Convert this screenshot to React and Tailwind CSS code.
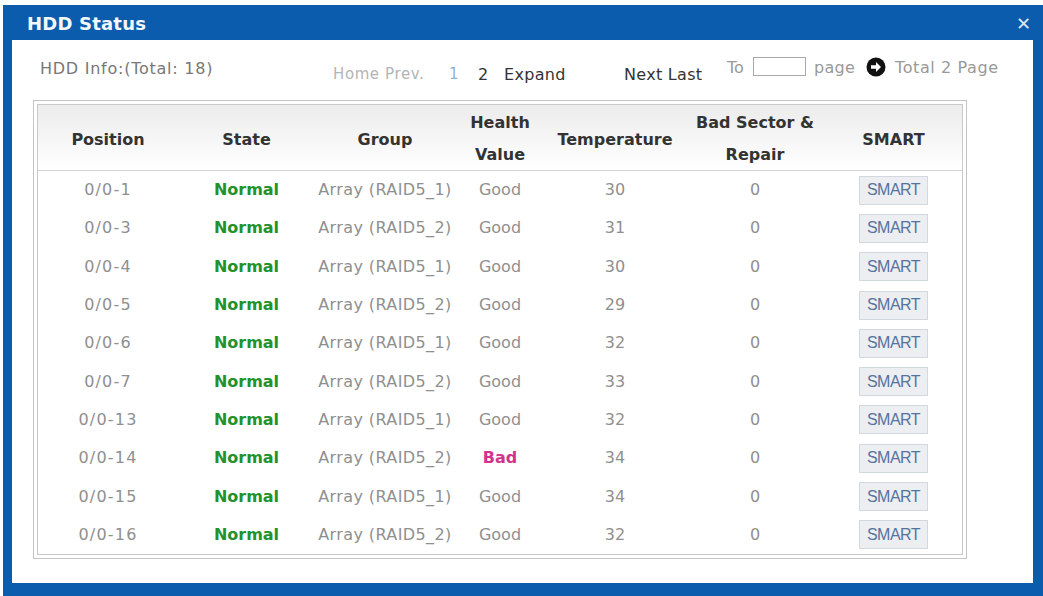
import { useState } from "react";

const ROWS = [
  { pos: "0/0-1", group: "Array (RAID5_1)", health: "Good", temp: 30 },
  { pos: "0/0-3", group: "Array (RAID5_2)", health: "Good", temp: 31 },
  { pos: "0/0-4", group: "Array (RAID5_1)", health: "Good", temp: 30 },
  { pos: "0/0-5", group: "Array (RAID5_2)", health: "Good", temp: 29 },
  { pos: "0/0-6", group: "Array (RAID5_1)", health: "Good", temp: 32 },
  { pos: "0/0-7", group: "Array (RAID5_2)", health: "Good", temp: 33 },
  { pos: "0/0-13", group: "Array (RAID5_1)", health: "Good", temp: 32 },
  { pos: "0/0-14", group: "Array (RAID5_2)", health: "Bad", temp: 34 },
  { pos: "0/0-15", group: "Array (RAID5_1)", health: "Good", temp: 34 },
  { pos: "0/0-16", group: "Array (RAID5_2)", health: "Good", temp: 32 },
];

const COLS = "grid grid-cols-[140px_137px_140px_90px_140px_140px_137px]";

function GoIcon() {
  return (
    <svg width="20" height="20" viewBox="0 0 20 20">
      <circle cx="10" cy="10" r="9.5" fill="#111" />
      <path d="M5 8.2h5V5l5 5-5 5v-3.2H5z" fill="#fff" />
    </svg>
  );
}

export default function App() {
  const [page, setPage] = useState("");

  return (
    <div className="w-[1043px] h-[596px] bg-white pt-[5px] pl-[3px] font-['DejaVu_Sans',sans-serif]">
      <div className="w-[1040px] h-[591px] bg-[#0b5cad] flex flex-col">
        {/* Title bar */}
        <div className="h-[35px] flex items-center justify-between pl-[24px] pr-[12px] pt-[2px]">
          <span className="text-[#f4f8fc] font-bold text-[18px] tracking-[0.2px]">HDD Status</span>
          <span className="text-[#dbe6f3] text-[18px] leading-none font-bold">✕</span>
        </div>

        {/* Body */}
        <div className="ml-[9px] mr-[10px] h-[543px] bg-white flex flex-col">
          <div className="h-[60px] relative text-[16px] shrink-0">
            <span className="absolute left-[28px] top-[17px] text-[#777] tracking-[0.75px]">HDD Info:(Total: 18)</span>
            <span className="absolute left-[321px] top-[23px] text-[#b4b4b4] text-[15px] tracking-[0.6px]">Home Prev.</span>
            <span className="absolute left-[437px] top-[23px] text-[#8fb4d8] text-[15px]">1</span>
            <span className="absolute left-[466px] top-[23px] text-[#333]">2</span>
            <span className="absolute left-[492px] top-[23px] text-[#333] tracking-[0.3px]">Expand</span>
            <span className="absolute left-[612px] top-[23px] text-[#333] tracking-[0.3px]">Next Last</span>
            <span className="absolute left-[715px] top-[16px] text-[#999]">To</span>
            <input
              value={page}
              onChange={(e) => setPage(e.target.value)}
              className="absolute left-[741px] top-[17px] w-[53px] h-[19px] border border-[#a9a9a9] outline-none"
            />
            <span className="absolute left-[802px] top-[16px] text-[#999] tracking-[0.3px]">page</span>
            <span className="absolute left-[854px] top-[17px]">
              <GoIcon />
            </span>
            <span className="absolute left-[883px] top-[16px] text-[#999] tracking-[0.6px]">Total 2 Page</span>
          </div>

          {/* Table */}
          <div className="ml-[21px] w-[934px] border border-[#c4c4c4] p-[3px]">
            <div className="border border-[#c9c9c9] w-full">
              <div className={`${COLS} h-[66px] bg-gradient-to-b from-[#ececec] to-white border-b border-[#d4d4d4] text-[#333] font-bold text-[16px] items-center text-center`}>
                <div className="pt-[4px]">Position</div>
                <div className="pt-[4px]">State</div>
                <div className="pt-[4px]">Group</div>
                <div className="leading-[32px] pt-[2px]">Health<br />Value</div>
                <div className="pt-[4px]">Temperature</div>
                <div className="leading-[32px] pt-[2px]">Bad Sector &amp;<br />Repair</div>
                <div className="pt-[4px]">SMART</div>
              </div>
              {ROWS.map((r) => (
                <div key={r.pos} className={`${COLS} h-[38.3px] items-center text-center text-[16px] text-[#8f8f8f]`}>
                  <div className="tracking-[1.2px]">{r.pos}</div>
                  <div className="font-bold text-[#22922a]">Normal</div>
                  <div className="tracking-[0.4px]">{r.group}</div>
                  <div className={r.health === "Bad" ? "font-bold text-[#d2338e]" : ""}>{r.health}</div>
                  <div>{r.temp}</div>
                  <div>0</div>
                  <div className="flex justify-center">
                    <button className="w-[69px] h-[29px] bg-[#eceef2] border border-[#d3d7de] text-[#56739e] text-[16px] font-['Liberation_Sans',sans-serif] tracking-[-0.5px]">
                      SMART
                    </button>
                  </div>
                </div>
              ))}
            </div>
          </div>
        </div>
      </div>
    </div>
  );
}
